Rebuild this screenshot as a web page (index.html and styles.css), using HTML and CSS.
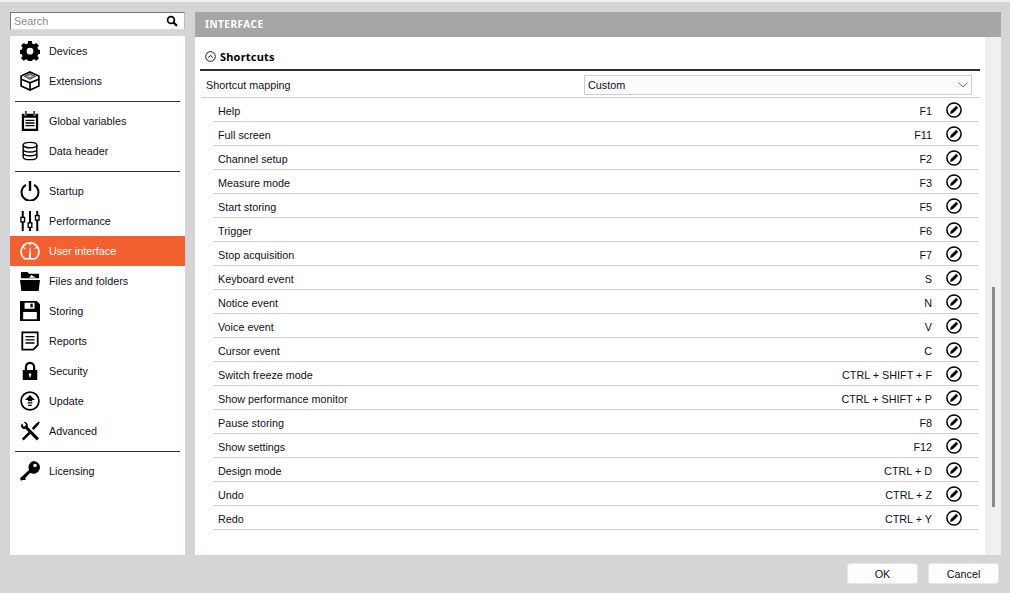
FILE: index.html
```html
<!DOCTYPE html>
<html lang="en">
<head>
<meta charset="utf-8">
<title>Settings</title>
<link rel="stylesheet" href="styles.css">
</head>
<body>
<svg class="defs" width="0" height="0" aria-hidden="true">
<symbol id="edit" viewBox="0 0 16 16">
<circle cx="8" cy="8" r="7.100" fill="none" stroke="currentColor" stroke-width="1.500"/>
<path d="M4 12l.9-3 4.600-4.600c.4-.4 1-.4 1.400 0l.7.700c.4.400.4 1 0 1.400L7 11.100z" fill="currentColor"/>
</symbol>
</svg>
<div class="app">
  <div class="main">
    <aside class="side">
      <div class="search"><span class="ph">Search</span>
        <svg class="mag" viewBox="0 0 12 12"><circle cx="5" cy="5" r="3.400" fill="none" stroke="#000" stroke-width="1.700"/><path d="M7.500 7.500l3.400 3.400" stroke="#000" stroke-width="2.200"/></svg>
      </div>
      <nav class="nav">
        <a class="item"><svg class="ic" viewBox="0 0 22 22"><path fill-rule="evenodd" d="M9 0h4l.6 2.900 1.800.8 2.500-1.600 2.900 2.900-1.600 2.500.8 1.800 3 .7v4l-3 .6-.8 1.800 1.600 2.500-2.900 2.900-2.500-1.600-1.800.8-.6 3H9l-.6-3-1.800-.8-2.500 1.600-2.900-2.900 1.600-2.500-.8-1.800-3-.6v-4l3-.7.8-1.800-1.600-2.500 2.900-2.900 2.500 1.600 1.800-.8zM11 7.500a3.700 3.700 0 1 0 0 7.400 3.700 3.700 0 0 0 0-7.400z"/></svg>Devices</a>
        <a class="item"><svg class="ic" viewBox="0 0 22 22"><path d="M11 1l9.800 4.500v11L11 21 1.200 16.500v-11z" fill="none" stroke="#000" stroke-width="1.800"/><path d="M1.500 9l9.500 4 9.500-4M11 13v8" fill="none" stroke="#000" stroke-width="1.800"/><path d="M11 2l7 3.700L11 10 4 5.700z" fill="#444"/><path d="M6.500 5.700h9M11 2.500v7M8 4l6 3.500M14 4L8 7.500" stroke="#fff" stroke-width=".6"/></svg>Extensions</a>
        <hr class="sep">
        <a class="item"><svg class="ic" viewBox="0 0 22 22"><path fill-rule="evenodd" d="M2 3h3v2h2V3h8v2h2V3h3v19H2zM4.500 7.500v12h13v-12z"/><path d="M5.800 0h1.400v4H5.800zM14.800 0h1.400v4h-1.400z"/><path d="M6 9.500h10v1.400H6zM6 12.500h10v1.400H6zM6 15.500h10v1.400H6z"/></svg>Global variables</a>
        <a class="item"><svg class="ic" viewBox="0 0 22 22"><g fill="none" stroke="#000" stroke-width="1.600"><ellipse cx="11" cy="4.500" rx="7.500" ry="3"/><path d="M3.500 4.500v13c0 1.700 3.400 3 7.500 3s7.500-1.300 7.500-3v-13M3.500 9c0 1.700 3.400 3 7.500 3s7.500-1.300 7.500-3M3.500 13.300c0 1.700 3.400 3 7.500 3s7.500-1.300 7.500-3"/></g></svg>Data header</a>
        <hr class="sep">
        <a class="item"><svg class="ic" viewBox="0 0 22 22"><path d="M6.500 4.300a9.300 9.300 0 1 0 9 0" fill="none" stroke="#000" stroke-width="2.200"/><path d="M11 0v11" stroke="#000" stroke-width="2.600"/></svg>Startup</a>
        <a class="item"><svg class="ic" viewBox="0 0 22 22"><path d="M3 0v22M11 0v22M19 0v22" stroke="#000" stroke-width="2.200"/><rect x="1" y="7" width="4" height="5" fill="#fff" stroke="#000" stroke-width="1.500"/><rect x="9" y="13" width="4" height="5" fill="#fff" stroke="#000" stroke-width="1.500"/><rect x="17" y="5" width="4" height="5" fill="#fff" stroke="#000" stroke-width="1.500"/></svg>Performance</a>
        <a class="item active"><svg class="ic" viewBox="0 0 22 22"><path d="M5 19.500a9.800 9.800 0 1 1 12 0z" fill="none" stroke="#fff" stroke-width="1.800"/><path d="M11 2v3M3.500 7l2.300 1.500M18.500 7l-2.300 1.500" stroke="#fff" stroke-width="1.300"/><path d="M9.800 19l.8-12h.8l.8 12z" fill="#fff"/></svg>User interface</a>
        <a class="item"><svg class="ic" viewBox="0 0 22 22"><path d="M1 1h7l2 2h11v5H1z"/><path d="M0 10h22l-1.500 12h-19z"/><path d="M10 7.500l2.500-3 5 3z" fill="#fff"/></svg>Files and folders</a>
        <a class="item"><svg class="ic" viewBox="0 0 22 22"><path fill-rule="evenodd" d="M0 0h18.500L22 3.500V22H0zM5 2v6.500h11V2zM3.500 12v8h15v-8z"/><path d="M11.500 3h2.500v4h-2.500z"/></svg>Storing</a>
        <a class="item"><svg class="ic" viewBox="0 0 22 22"><path d="M2.500 1.500h17v14l-5 5h-12z" fill="none" stroke="#000" stroke-width="2"/><path d="M6 5.500h10V7H6zM6 9h10v1.500H6zM6 12.500h10V14H6z"/></svg>Reports</a>
        <a class="item"><svg class="ic" viewBox="0 0 22 22"><path d="M6.500 10V6.500a4.500 4.500 0 0 1 9 0V10" fill="none" stroke="#000" stroke-width="2.400"/><path fill-rule="evenodd" d="M3 10h16v11H3zM11 13.500a1.500 1.500 0 0 0-.7 2.800V18h1.400v-1.700a1.500 1.500 0 0 0-.7-2.800z"/></svg>Security</a>
        <a class="item"><svg class="ic" viewBox="0 0 22 22"><circle cx="11" cy="11" r="9.800" fill="none" stroke="#000" stroke-width="1.900"/><path d="M11 4.500l5.500 5.300h-3.300v1.500H8.800V9.800H5.500z"/><path d="M8.500 12.300h5v1.400h-5zM9 15h4v1.400H9z"/></svg>Update</a>
        <a class="item"><svg class="ic" viewBox="0 0 22 22"><path d="M2.500 2.500C1 4 .7 6.200 2 7.700c1.200 1.200 2.800 1.300 4 .8L18.500 21.500l2.500-2.500L8.500 6.700c.5-1.500.2-3-.8-4.200C6.500 1.300 5 .7 3.800.9l2.700 2.700-.6 2-2 .6z"/><path d="M2 19.500L11.500 10l2 2L4 21.500zM13 8l5-5.500L20.800.5l1 1-1.500 2.500L15 10z"/></svg>Advanced</a>
        <hr class="sep">
        <a class="item"><svg class="ic" viewBox="0 0 22 22"><path fill-rule="evenodd" d="M14.800 0a7 7 0 1 1-3.500 13L6 18.500v2.500H2.500L1 22l-1-3 10-9.200A7 7 0 0 1 14.800 0z"/><circle cx="16.500" cy="5" r="2" fill="#fff"/></svg>Licensing</a>
      </nav>
    </aside>
    <section class="panel">
      <h1 class="title">INTERFACE</h1>
      <div class="body">
        <div class="content">
          <h2 class="sect"><svg class="chev" viewBox="0 0 10 10"><circle cx="5" cy="5" r="4.400" fill="none" stroke="#000" stroke-width=".8"/><path d="M2.900 6l2.100-2 2.100 2" fill="none" stroke="#000" stroke-width=".9"/></svg>Shortcuts</h2>
          <div class="map"><span class="map-l">Shortcut mapping</span>
            <div class="select">Custom<svg class="caret" viewBox="0 0 10 6"><path d="M.5.500L5 5 9.500.5" fill="none" stroke="#777"/></svg></div>
          </div>
          <ul class="rows">
            <li class="row"><span class="nm">Help</span><span class="key">F1</span><svg class="pen"><use href="#edit"/></svg></li>
            <li class="row"><span class="nm">Full screen</span><span class="key">F11</span><svg class="pen"><use href="#edit"/></svg></li>
            <li class="row"><span class="nm">Channel setup</span><span class="key">F2</span><svg class="pen"><use href="#edit"/></svg></li>
            <li class="row"><span class="nm">Measure mode</span><span class="key">F3</span><svg class="pen"><use href="#edit"/></svg></li>
            <li class="row"><span class="nm">Start storing</span><span class="key">F5</span><svg class="pen"><use href="#edit"/></svg></li>
            <li class="row"><span class="nm">Trigger</span><span class="key">F6</span><svg class="pen"><use href="#edit"/></svg></li>
            <li class="row"><span class="nm">Stop acquisition</span><span class="key">F7</span><svg class="pen"><use href="#edit"/></svg></li>
            <li class="row"><span class="nm">Keyboard event</span><span class="key">S</span><svg class="pen"><use href="#edit"/></svg></li>
            <li class="row"><span class="nm">Notice event</span><span class="key">N</span><svg class="pen"><use href="#edit"/></svg></li>
            <li class="row"><span class="nm">Voice event</span><span class="key">V</span><svg class="pen"><use href="#edit"/></svg></li>
            <li class="row"><span class="nm">Cursor event</span><span class="key">C</span><svg class="pen"><use href="#edit"/></svg></li>
            <li class="row"><span class="nm">Switch freeze mode</span><span class="key">CTRL + SHIFT + F</span><svg class="pen"><use href="#edit"/></svg></li>
            <li class="row"><span class="nm">Show performance monitor</span><span class="key">CTRL + SHIFT + P</span><svg class="pen"><use href="#edit"/></svg></li>
            <li class="row"><span class="nm">Pause storing</span><span class="key">F8</span><svg class="pen"><use href="#edit"/></svg></li>
            <li class="row"><span class="nm">Show settings</span><span class="key">F12</span><svg class="pen"><use href="#edit"/></svg></li>
            <li class="row"><span class="nm">Design mode</span><span class="key">CTRL + D</span><svg class="pen"><use href="#edit"/></svg></li>
            <li class="row"><span class="nm">Undo</span><span class="key">CTRL + Z</span><svg class="pen"><use href="#edit"/></svg></li>
            <li class="row"><span class="nm">Redo</span><span class="key">CTRL + Y</span><svg class="pen"><use href="#edit"/></svg></li>
          </ul>
        </div>
        <div class="track"><div class="thumb"></div></div>
      </div>
    </section>
  </div>
  <footer class="foot">
    <button class="btn">OK</button>
    <button class="btn">Cancel</button>
  </footer>
</div>
</body>
</html>
```
FILE: styles.css
```css
* { box-sizing: border-box; }
html, body { margin: 0; height: 100%; }
body { background: #d6d4d7; border-top: 2px solid #f0f0f0; font: 10.8px/14px "Liberation Sans", Arial, sans-serif; color: #10101a; overflow: hidden; }
.defs { position: absolute; }
.app { display: flex; flex-direction: column; height: 591px; }
.main { display: flex; height: 553px; padding: 10px 9px 0 10px; gap: 10px; }
.side { width: 175px; display: flex; flex-direction: column; }
.search { height: 18px; background: #fff; border: 1px solid #777; border-right-color: #bbb; border-bottom-color: #ddd; display: flex; align-items: center; justify-content: space-between; padding: 0 6px 0 3px; }
.ph { color: #8a8a8a; }
.mag { width: 12px; height: 12px; }
.nav { margin-top: 6px; flex: 1; background: #fff; display: flex; flex-direction: column; }
.item { height: 30px; flex: none; display: flex; align-items: center; padding-left: 10px; gap: 9px; }
.ic { width: 20px; height: 20px; flex: none; }
.active { background: #f36130; color: #fff; }
.sep { height: 1px; border: 0; margin: 5px 5px 4px; flex: none; background: #333; }
.panel { flex: 1; display: flex; flex-direction: column; }
.title { margin: 0; height: 25px; flex: none; background: #a6a6a6; color: #fff; font: bold 10px/25px "Noto Sans", sans-serif; padding-left: 10px; letter-spacing: .5px; }
.body { flex: 1; display: flex; min-height: 0; }
.content { width: 790px; background: #fff; padding: 0 5px; }
.sect { margin: 0; height: 34px; border-bottom: 2px solid #2e2e2e; display: flex; align-items: center; gap: 4px; padding: 7px 0 0 5px; font: bold 11px/14px "Noto Sans", sans-serif; letter-spacing: .2px; color: #000; }
.chev { width: 11px; height: 11px; }
.map { height: 27px; margin-left: 1px; border-bottom: 1px solid #cfcfcf; display: flex; align-items: center; justify-content: space-between; padding: 2px 8px 0 5px; }
.select { width: 388px; height: 20px; border: 1px solid #cfcfcf; display: flex; align-items: center; justify-content: space-between; padding: 0 3px; background: #fcfcfc; }
.caret { width: 10px; height: 6px; }
.rows { list-style: none; margin: 0 2px 0 13px; padding: 0; }
.row { height: 24px; border-bottom: 1px solid #cfcfcf; display: flex; align-items: center; padding: 0 16px 0 5px; }
.nm { flex: 1; padding-top: 2px; }
.key { margin-right: 14px; padding-top: 2px; }
.pen { width: 16px; height: 16px; color: #000; }
.track { flex: 1; background: #f0f0f0; padding-left: 7px; }
.thumb { width: 3px; height: 220px; margin-top: 250px; background: #8a8a8a; }
.foot { flex: 1; display: flex; justify-content: flex-end; gap: 10px; padding: 8px 11px 0 0; align-items: flex-start; }
.btn { width: 71px; height: 21px; border: 1px solid #e6e6e6; border-radius: 3px; background: #fdfdfd; font: inherit; color: inherit; padding: 0; }
```
